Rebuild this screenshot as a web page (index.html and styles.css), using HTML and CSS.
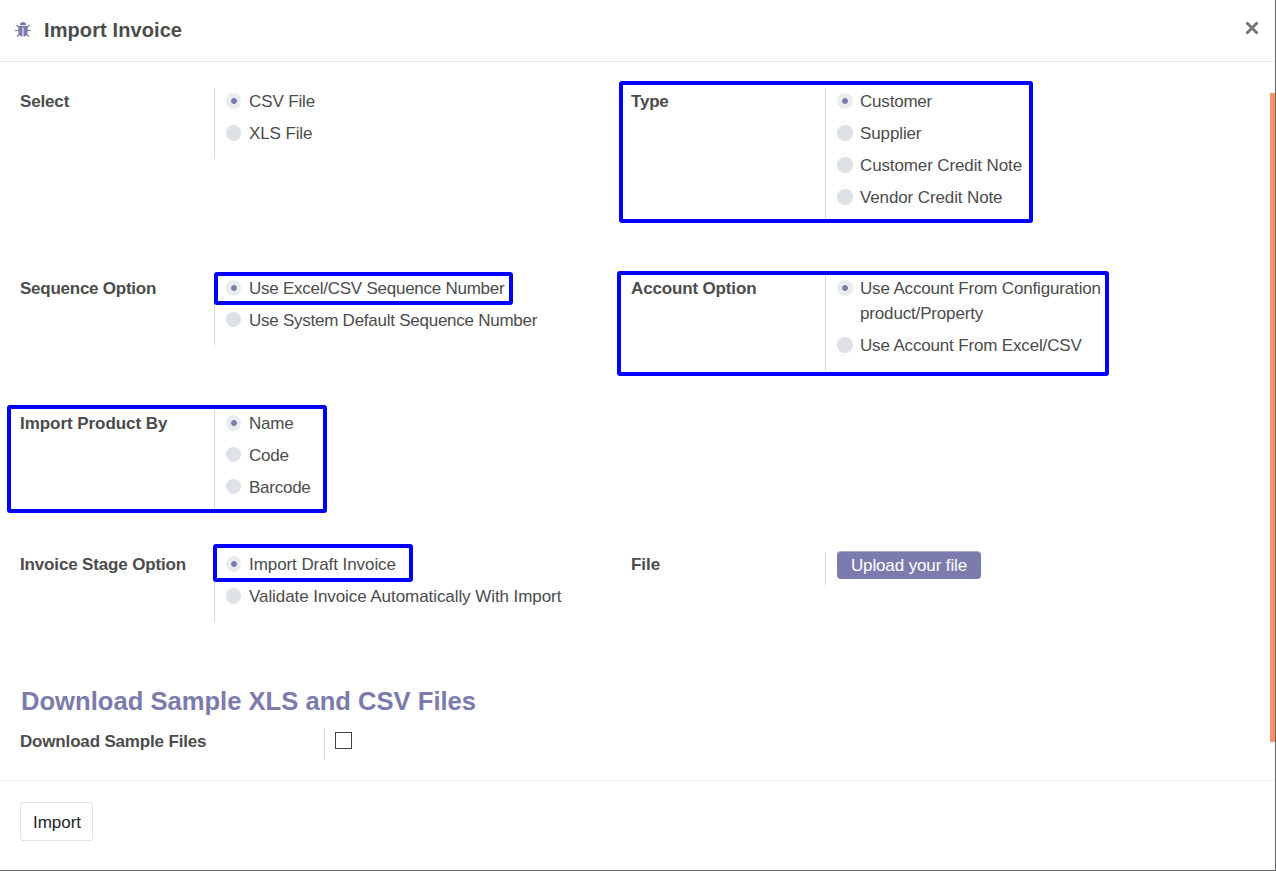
FILE: index.html
```html
<!DOCTYPE html>
<html lang="en">
<head>
<meta charset="utf-8">
<title>Import Invoice</title>
<link rel="stylesheet" href="styles.css">
</head>
<body>
<div class="modal">
  <header class="modal-header">
    <svg class="bug" viewBox="0 0 16 16" aria-hidden="true">
      <path d="M4.900 3.200a3.100 3.100 0 0 1 6.200 0z"/>
      <path d="M3.300 4h9.400v5.500c0 3-1.500 5-4.200 5V5.500h-1v9c-2.700 0-4.200-2-4.200-5z"/>
      <path class="legs" d="M4 5.500L1.500 3M3.800 8.500H0M4.500 12L2 14.700M12 5.500L14.500 3M12.200 8.500H16M11.500 12l2.500 2.700"/>
    </svg>
    <h1 class="title">Import Invoice</h1>
    <button class="close" aria-label="Close"><svg viewBox="0 0 12 12"><path d="M1.300 1.300L10.700 10.700M10.700 1.300L1.300 10.700"/></svg></button>
  </header>
  <main class="modal-body">
    <section class="row row-type">
      <div class="field">
        <div class="label">Select</div>
        <div class="options">
          <label class="option snug"><i class="radio on"></i>CSV File</label>
          <label class="option snug"><i class="radio"></i>XLS File</label>
        </div>
      </div>
      <div class="field">
        <div class="label tight">Type</div>
        <div class="options">
          <label class="option tight"><i class="radio on"></i>Customer</label>
          <label class="option snug"><i class="radio"></i>Supplier</label>
          <label class="option snug"><i class="radio"></i>Customer Credit Note</label>
          <label class="option snug"><i class="radio"></i>Vendor Credit Note</label>
        </div>
        <span class="mark mark-type"></span>
      </div>
    </section>
    <section class="row row-sequence">
      <div class="field">
        <div class="label tighter">Sequence Option</div>
        <div class="options">
          <label class="option tighter"><i class="radio on"></i>Use Excel/CSV Sequence Number</label>
          <label class="option tighter"><i class="radio"></i>Use System Default Sequence Number</label>
        </div>
        <span class="mark mark-sequence"></span>
      </div>
      <div class="field">
        <div class="label">Account Option</div>
        <div class="options">
          <label class="option close-set"><i class="radio on"></i><span>Use Account From Configuration<br>product/Property</span></label>
          <label class="option close-set"><i class="radio"></i>Use Account From Excel/CSV</label>
        </div>
        <span class="mark mark-account"></span>
      </div>
    </section>
    <section class="row row-product">
      <div class="field">
        <div class="label loose">Import Product By</div>
        <div class="options">
          <label class="option tighter"><i class="radio on"></i>Name</label>
          <label class="option tighter"><i class="radio"></i>Code</label>
          <label class="option tighter"><i class="radio"></i>Barcode</label>
        </div>
        <span class="mark mark-product"></span>
      </div>
    </section>
    <section class="row row-stage">
      <div class="field">
        <div class="label">Invoice Stage Option</div>
        <div class="options">
          <label class="option loose"><i class="radio on"></i>Import Draft Invoice</label>
          <label class="option loose"><i class="radio"></i>Validate Invoice Automatically With Import</label>
        </div>
        <span class="mark mark-stage"></span>
      </div>
      <div class="field">
        <div class="label loose">File</div>
        <div class="options file"><button class="upload snug">Upload your file</button></div>
      </div>
    </section>
    <h2 class="heading">Download Sample XLS and CSV Files</h2>
    <div class="field sample">
      <div class="label close-set">Download Sample Files</div>
      <div class="options check"><i class="checkbox"></i></div>
    </div>
    <span class="scrollbar"></span>
  </main>
  <footer class="modal-footer"><button class="import">Import</button></footer>
</div>
</body>
</html>
```
FILE: styles.css
```css
* { box-sizing: border-box; }
body {
  margin: 0;
  font: 17px/25px "Liberation Sans", Arial, sans-serif;
  color: #4c4c4c;
  background: #fff;
}
button { font: inherit; }
.modal {
  width: 1276px;
  height: 871px;
  display: flex;
  flex-direction: column;
  border-right: 1px solid #666;
  border-bottom: 1px solid #666;
  overflow: hidden;
}
.modal-header {
  height: 62px;
  display: flex;
  align-items: center;
  padding: 0 16px 1px 15px;
  border-bottom: 1px solid #e9e9ea;
}
.bug { width: 16px; height: 16px; fill: #7c7bad; }
.legs { stroke: #7c7bad; stroke-width: 1.2; fill: none; }
.title { margin: 0 auto 0 13px; font-size: 20px; line-height: 30px; letter-spacing: 0.1px; }
.close { border: 0; background: none; padding: 0; width: 14.5px; height: 18px; display: flex; }
.close svg { width: 14px; height: 14px; fill: none; stroke: #777; stroke-width: 2.6; }
.modal-body { position: relative; height: 718px; padding: 26px 0 0 20px; }
.row {
  display: grid;
  grid-template-columns: 611px 611px;
  align-items: start;
}
.row-type { height: 187px; }
.row-sequence { height: 135px; }
.row-product { height: 141px; }
.row-stage { height: 134px; }
.field { position: relative; display: grid; grid-template-columns: 194px 1fr; }
.label { font-weight: bold; padding-top: 1px; letter-spacing: -0.15px; }
.label.loose { letter-spacing: -0.05px; }
.label.close-set { letter-spacing: -0.17px; }
.label.tight { letter-spacing: -0.2px; }
.options { border-left: 1px solid #d9d9da; padding: 1px 0 6px 11px; }
.row-sequence .field:first-child .options { padding-bottom: 5px; }
.option { display: flex; margin-bottom: 7px; line-height: 25px; }
.loose { letter-spacing: -0.07px; }
.snug { letter-spacing: -0.12px; }
.close-set { letter-spacing: -0.16px; }
.tight { letter-spacing: -0.2px; }
.tighter { letter-spacing: -0.25px; }
.radio {
  flex: none;
  width: 16px;
  height: 16px;
  margin: 4px 7px 0 0;
  border-radius: 50%;
  background: #dee2e6;
}
.field:first-child .radio { width: 15px; margin-right: 8px; }
.row-sequence .field:first-child .radio:not(.on),
.row-product .radio:not(.on) { height: 15px; }
.radio.on { background: radial-gradient(circle at 8px 8px, #7c7bad 2.500px, #e9ecef 3.300px); }
.mark { position: absolute; border: 4px solid #00f; border-radius: 3px; }
.mark-type { left: -12px; top: -7px; width: 414px; height: 142px; }
.mark-sequence { left: 194px; top: -3px; width: 299px; height: 33px; }
.mark-account { left: -14px; top: -4px; width: 492px; height: 105px; }
.mark-product { left: -13px; top: -5px; width: 320px; height: 108px; }
.mark-stage { left: 193px; top: -7px; width: 200px; height: 38px; }
.file { height: 33px; padding: 0 0 0 11px; margin-top: 1px; }
.upload {
  display: block;
  width: 144px;
  height: 28px;
  margin-top: -1px;
  padding: 0 0 1px;
  border: 0;
  border-top: 1px solid #a9a8c9;
  border-radius: 4px;
  background: #7c7bad;
  color: #fff;
}
.heading { margin: 0 0 11px 1px; font-size: 25.6px; line-height: 32px; color: #7c7bad; }
.sample { grid-template-columns: 304px 1fr; }
.check { height: 32px; padding: 4px 0 0 10px; }
.checkbox { display: block; width: 17px; height: 17px; border: 1px solid #444; }
.scrollbar { position: absolute; right: 0; top: 31px; width: 5px; height: 649px; background: #f4926b; }
.modal-footer { flex: 1; border-top: 1px solid #f1f1f2; padding: 21px 20px; }
.import {
  width: 73px;
  height: 39px;
  padding: 1px 0 0 1px;
  border: 1px solid #dee2e6;
  border-radius: 3px;
  background: #fff;
  color: #212529;
}
```
